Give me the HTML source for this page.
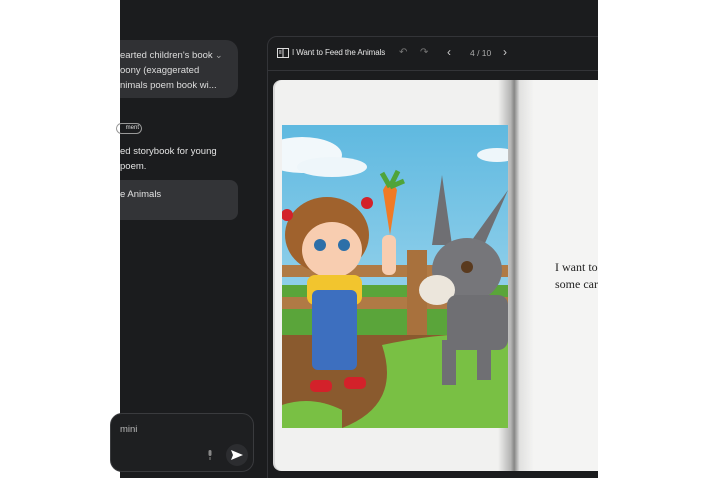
<!DOCTYPE html>
<html style="overflow:hidden"><head><style>
html,body{margin:0;width:720px;height:478px;overflow:hidden}
body{background:#fff;position:relative;font-family:"Liberation Sans",sans-serif}
.dark{position:absolute;left:120px;top:0;width:478px;height:478px;background:#1b1c1e}
.t{position:absolute;color:#e3e3e3;font-size:9.5px;white-space:nowrap}
</style></head><body>
<div class="dark"></div>
<div style="position:absolute;left:120px;top:40px;width:118px;height:58px;background:#303134;border-radius:0 12px 12px 0"></div>
<div class="t" style="left:120px;top:48px;line-height:15px;color:#ddd">earted children's book<br>oony (exaggerated<br>nimals poem book wi...</div>
<div class="t" style="left:215px;top:50px;color:#aaa;font-size:9px">⌄</div>
<div style="position:absolute;left:116px;top:123px;width:22px;height:9px;border:1px solid #999;border-radius:6px;font-size:6px;color:#ddd;line-height:9px;text-align:right;padding-right:2px">ment</div>
<div class="t" style="left:120px;top:144px;line-height:15px">ed storybook for young<br>poem.</div>
<div style="position:absolute;left:120px;top:180px;width:118px;height:40px;background:#333437;border-radius:0 8px 8px 0"></div>
<div class="t" style="left:120px;top:189px">e Animals</div>
<div style="position:absolute;left:110px;top:413px;width:142px;height:57px;border:1px solid #3a3b3e;border-radius:12px;background:#1e1f21"></div>
<div class="t" style="left:120px;top:424px;color:#bbb">mini</div>
<svg style="position:absolute;left:207px;top:450px" width="6" height="10"><rect x="1.5" y="0" width="3" height="6" rx="1.5" fill="#888"/><line x1="3" y1="7" x2="3" y2="10" stroke="#888"/></svg>
<div style="position:absolute;left:226px;top:444px;width:22px;height:22px;border-radius:50%;background:#2c2d30"></div>
<svg style="position:absolute;left:231px;top:450px" width="12" height="10"><path d="M0 0L12 5L0 10L2 5Z" fill="#fff"/></svg>
<div style="position:absolute;left:267px;top:36px;width:340px;height:460px;border:1px solid #333438;border-radius:10px;background:#1b1c1e"></div>
<div style="position:absolute;left:268px;top:70px;width:330px;height:1px;background:#333438"></div>
<svg style="position:absolute;left:277px;top:48px" width="12" height="10"><rect x="0.5" y="0.5" width="11" height="9" fill="none" stroke="#ddd"/><line x1="6" y1="1" x2="6" y2="9" stroke="#ddd"/><line x1="2" y1="3" x2="4.5" y2="3" stroke="#ddd"/><line x1="2" y1="5" x2="4.5" y2="5" stroke="#ddd"/></svg>
<div class="t" style="left:292px;top:48px;font-size:8px;color:#e6e6e6;letter-spacing:-0.1px">I Want to Feed the Animals</div>
<div class="t" style="left:399px;top:47px;color:#777;font-size:10px">↶</div>
<div class="t" style="left:420px;top:47px;color:#777;font-size:10px">↷</div>
<div class="t" style="left:447px;top:45px;color:#ccc;font-size:12px">‹</div>
<div class="t" style="left:470px;top:48px;color:#aaa;font-size:8.5px">4 / 10</div>
<div class="t" style="left:503px;top:45px;color:#ccc;font-size:12px">›</div>
<div style="position:absolute;left:275px;top:80px;width:240px;height:391px;background:#f1f1f0;border-radius:8px 0 0 8px;box-shadow:-2px 0 0 #d8d8d8"></div>
<div style="position:absolute;left:510px;top:80px;width:88px;height:391px;background:#f4f4f3"></div>
<div style="position:absolute;left:498px;top:80px;width:36px;height:391px;background:linear-gradient(90deg,rgba(0,0,0,0) 0%,rgba(0,0,0,.25) 35%,rgba(0,0,0,.45) 45%,rgba(0,0,0,.08) 60%,rgba(0,0,0,0) 100%)"></div>
<svg style="position:absolute;left:282px;top:125px" width="226" height="303" viewBox="0 0 226 303">
<defs><linearGradient id="sky" x1="0" y1="0" x2="0" y2="1"><stop offset="0" stop-color="#5fb9e0"/><stop offset="1" stop-color="#b9e2f3"/></linearGradient></defs>
<rect width="226" height="303" fill="url(#sky)"/>
<ellipse cx="20" cy="30" rx="40" ry="18" fill="#f2f8fb"/><ellipse cx="50" cy="42" rx="35" ry="10" fill="#eef6fa"/>
<ellipse cx="215" cy="30" rx="20" ry="7" fill="#eef6fa"/>
<rect y="160" width="226" height="60" fill="#5aa53a"/>
<rect y="140" width="226" height="12" fill="#b07a45"/><rect y="172" width="226" height="12" fill="#b07a45"/>
<rect x="125" y="125" width="20" height="110" fill="#a8713d"/>
<rect y="210" width="226" height="93" fill="#8a5a2e"/>
<path d="M100 220 Q170 205 226 210 L226 303 L60 303 Q120 280 100 220Z" fill="#79c044"/>
<path d="M0 280 Q30 270 60 285 L60 303 L0 303Z" fill="#79c044"/>
<ellipse cx="45" cy="110" rx="42" ry="38" fill="#a0622d"/>
<ellipse cx="50" cy="125" rx="30" ry="28" fill="#f8cdb0"/>
<circle cx="38" cy="120" r="6" fill="#2d6fa8"/><circle cx="62" cy="120" r="6" fill="#2d6fa8"/>
<circle cx="5" cy="90" r="6" fill="#d3212a"/><circle cx="85" cy="78" r="6" fill="#d3212a"/>
<rect x="25" y="150" width="55" height="30" rx="8" fill="#f2c52e"/>
<rect x="30" y="165" width="45" height="80" rx="6" fill="#3d6fbf"/>
<rect x="100" y="110" width="14" height="40" rx="6" fill="#f8cdb0"/>
<path d="M101 65 Q108 50 115 65 L108 110Z" fill="#f07a26"/>
<path d="M108 62 l-8 -14 M108 62 l8 -16 M108 62 l14 -6" stroke="#4fa43a" stroke-width="5"/>
<rect x="28" y="255" width="22" height="12" rx="5" fill="#d3212a"/><rect x="62" y="252" width="22" height="12" rx="5" fill="#d3212a"/>
<path d="M160 50 L170 120 L150 120Z" fill="#6f6f73"/><path d="M226 65 L200 125 L190 115Z" fill="#6f6f73"/>
<ellipse cx="185" cy="145" rx="35" ry="32" fill="#76767a"/>
<ellipse cx="155" cy="165" rx="18" ry="15" fill="#ece6dc"/>
<circle cx="185" cy="142" r="6" fill="#5a3a1e"/>
<rect x="165" y="170" width="61" height="55" rx="10" fill="#6f6f73"/>
<rect x="160" y="215" width="14" height="45" fill="#6f6f73"/><rect x="195" y="215" width="14" height="40" fill="#6f6f73"/>
</svg>
<div style="position:absolute;left:555px;top:259px;font-family:'Liberation Serif',serif;font-size:12px;line-height:17px;color:#222;white-space:nowrap;width:43px;overflow:hidden">I want to<br>some carr</div>
<div style="position:absolute;left:598px;top:0;width:122px;height:478px;background:#fff"></div>
</body></html>
